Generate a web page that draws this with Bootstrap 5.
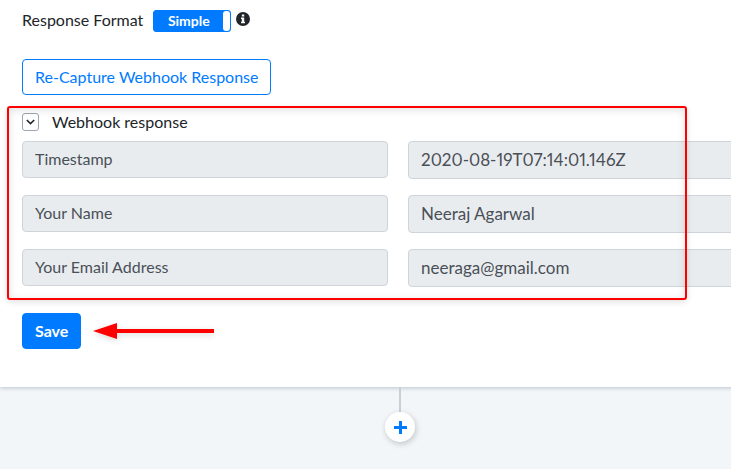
<!DOCTYPE html>
<html lang="en">
<head>
<meta charset="utf-8">
<meta name="viewport" content="width=device-width, initial-scale=1">
<title>Webhook response</title>
<link href="https://cdn.jsdelivr.net/npm/bootstrap@5.3.0/dist/css/bootstrap.min.css" rel="stylesheet">
<style>
  body { font-family: Lato, "Noto Sans", sans-serif; font-size: 16px; line-height: 24px; color: #212529; background: #f2f6f9; }
  /* the workflow canvas is wider than the viewport and runs off to the right */
  .canvas { width: calc(100% + 69px); }
  .step-panel { padding: 8px 26px 38px 22px; box-shadow: 0 1px 4px rgba(60, 80, 100, .3); }
  .format-row { gap: 10px; margin-bottom: 27px; }
  .toggle { width: 78px; height: 22px; margin-top: 2px; font-size: 14px; font-weight: 700; line-height: 20px; background: #007bff; border: 1px solid #007bff; border-radius: 3px; color: #fff; cursor: pointer; }
  .toggle-knob { width: 7px; height: 20px; background: #fff; border-radius: 3px; }
  .info { margin: 0 0 2px 5px; }
  .btn-capture, .btn-save { font-size: 16px; line-height: 22px; padding: 6px 12px; border-radius: 4px; }
  .btn-capture { color: #007bff; border-color: #007bff; background: #fff; }
  .btn-save { background: #007bff; border-color: #007bff; color: #fff; font-weight: 700; }
  .response { margin-top: 15px; }
  .highlight { top: -4px; bottom: -13px; left: -15px; right: 87px; border: 2px solid #f00; border-radius: 3px; box-shadow: 0 2px 6px rgba(0, 0, 0, .12), inset 0 2px 8px rgba(0, 0, 0, .12); pointer-events: none; }
  .collapse-btn { width: 17px; height: 18px; border: 1px solid #9ba5b1; border-radius: 3px; background: #fff; color: #212529; }
  .response-head { gap: 13px; margin-bottom: 7px; }
  .fields { display: grid; grid-template-columns: 1fr 1fr; gap: 16px 20px; align-items: start; }
  .fields .form-control { height: 38px; padding: 5px 12px 7px; font-size: 17px; font-variant-numeric: proportional-nums; color: #495057; background: #e9ecef; border-color: #ced4da; border-radius: 4px; }
  .fields .field-name { height: 37px; font-size: 16px; }
  .save-row { gap: 12px; margin-top: 26px; }
  .arrow { filter: drop-shadow(0 2px 3px rgba(0, 0, 0, .15)); overflow: visible; }
  .stem { width: 2px; height: 25px; background: #c9cfd6; }
  .add-step { width: 30px; height: 30px; background: #fff; box-shadow: 1px 2px 6px rgba(0, 0, 0, .2); }
</style>
</head>
<body>
<div class="overflow-hidden min-vh-100">
<main class="canvas">
  <section class="step-panel bg-white">
    <div class="format-row d-flex align-items-center">
      <span id="format-label">Response Format</span>
      <div class="d-flex align-items-center">
        <input type="checkbox" class="btn-check" id="simple" checked aria-describedby="format-label">
        <label for="simple" class="toggle d-flex align-items-center"><span class="flex-fill text-center">Simple</span><span class="toggle-knob"></span></label>
        <svg class="info" width="14" height="14" viewBox="0 0 14 14" role="img" aria-label="Information"><circle cx="7" cy="7" r="7" fill="#212529"/><path d="M5.9 2.4h2.3v2.2H5.900zM5 5.500h3.200v4.200H9v1.500H5V9.700h.8V7H5z" fill="#fff"/></svg>
      </div>
    </div>
    <button type="button" class="btn btn-capture">Re-Capture Webhook Response</button>

    <div class="response position-relative">
      <div class="response-head d-flex align-items-center">
        <button type="button" class="collapse-btn d-flex align-items-center justify-content-center p-0" aria-label="Collapse webhook response">
          <svg width="9" height="6" viewBox="0 0 9 6" fill="none" stroke="currentColor" stroke-width="1.6"><path d="M.8 1l3.700 3.600L8.200 1"/></svg>
        </button>
        <span>Webhook response</span>
      </div>
      <div class="fields">
        <input class="form-control field-name" aria-label="Field 1 name" value="Timestamp" readonly>
        <input class="form-control" aria-label="Timestamp" value="2020-08-19T07:14:01.146Z" readonly>
        <input class="form-control field-name" aria-label="Field 2 name" value="Your Name" readonly>
        <input class="form-control" aria-label="Your Name" value="Neeraj Agarwal" readonly>
        <input class="form-control field-name" aria-label="Field 3 name" value="Your Email Address" readonly>
        <input class="form-control" aria-label="Your Email Address" value="neeraga@gmail.com" readonly>
      </div>
      <div class="highlight position-absolute"></div>
    </div>

    <div class="save-row d-flex align-items-center">
      <button type="button" class="btn btn-save">Save</button>
      <svg class="arrow" width="121" height="16" viewBox="0 0 121 16" aria-hidden="true"><path d="M0 8L24 0v6h97v4H24v6z" fill="#f00"/></svg>
    </div>
  </section>

  <div class="d-flex flex-column align-items-center">
    <div class="stem"></div>
    <button type="button" class="add-step border-0 rounded-circle p-0 d-flex align-items-center justify-content-center" aria-label="Add step">
      <svg width="13" height="13" viewBox="0 0 13 13"><path d="M5 0h3v5h5v3H8v5H5V8H0V5h5z" fill="#007bff"/></svg>
    </button>
  </div>
</main>
</div>
<script src="https://cdn.jsdelivr.net/npm/bootstrap@5.3.0/dist/js/bootstrap.bundle.min.js"></script>
</body>
</html>
